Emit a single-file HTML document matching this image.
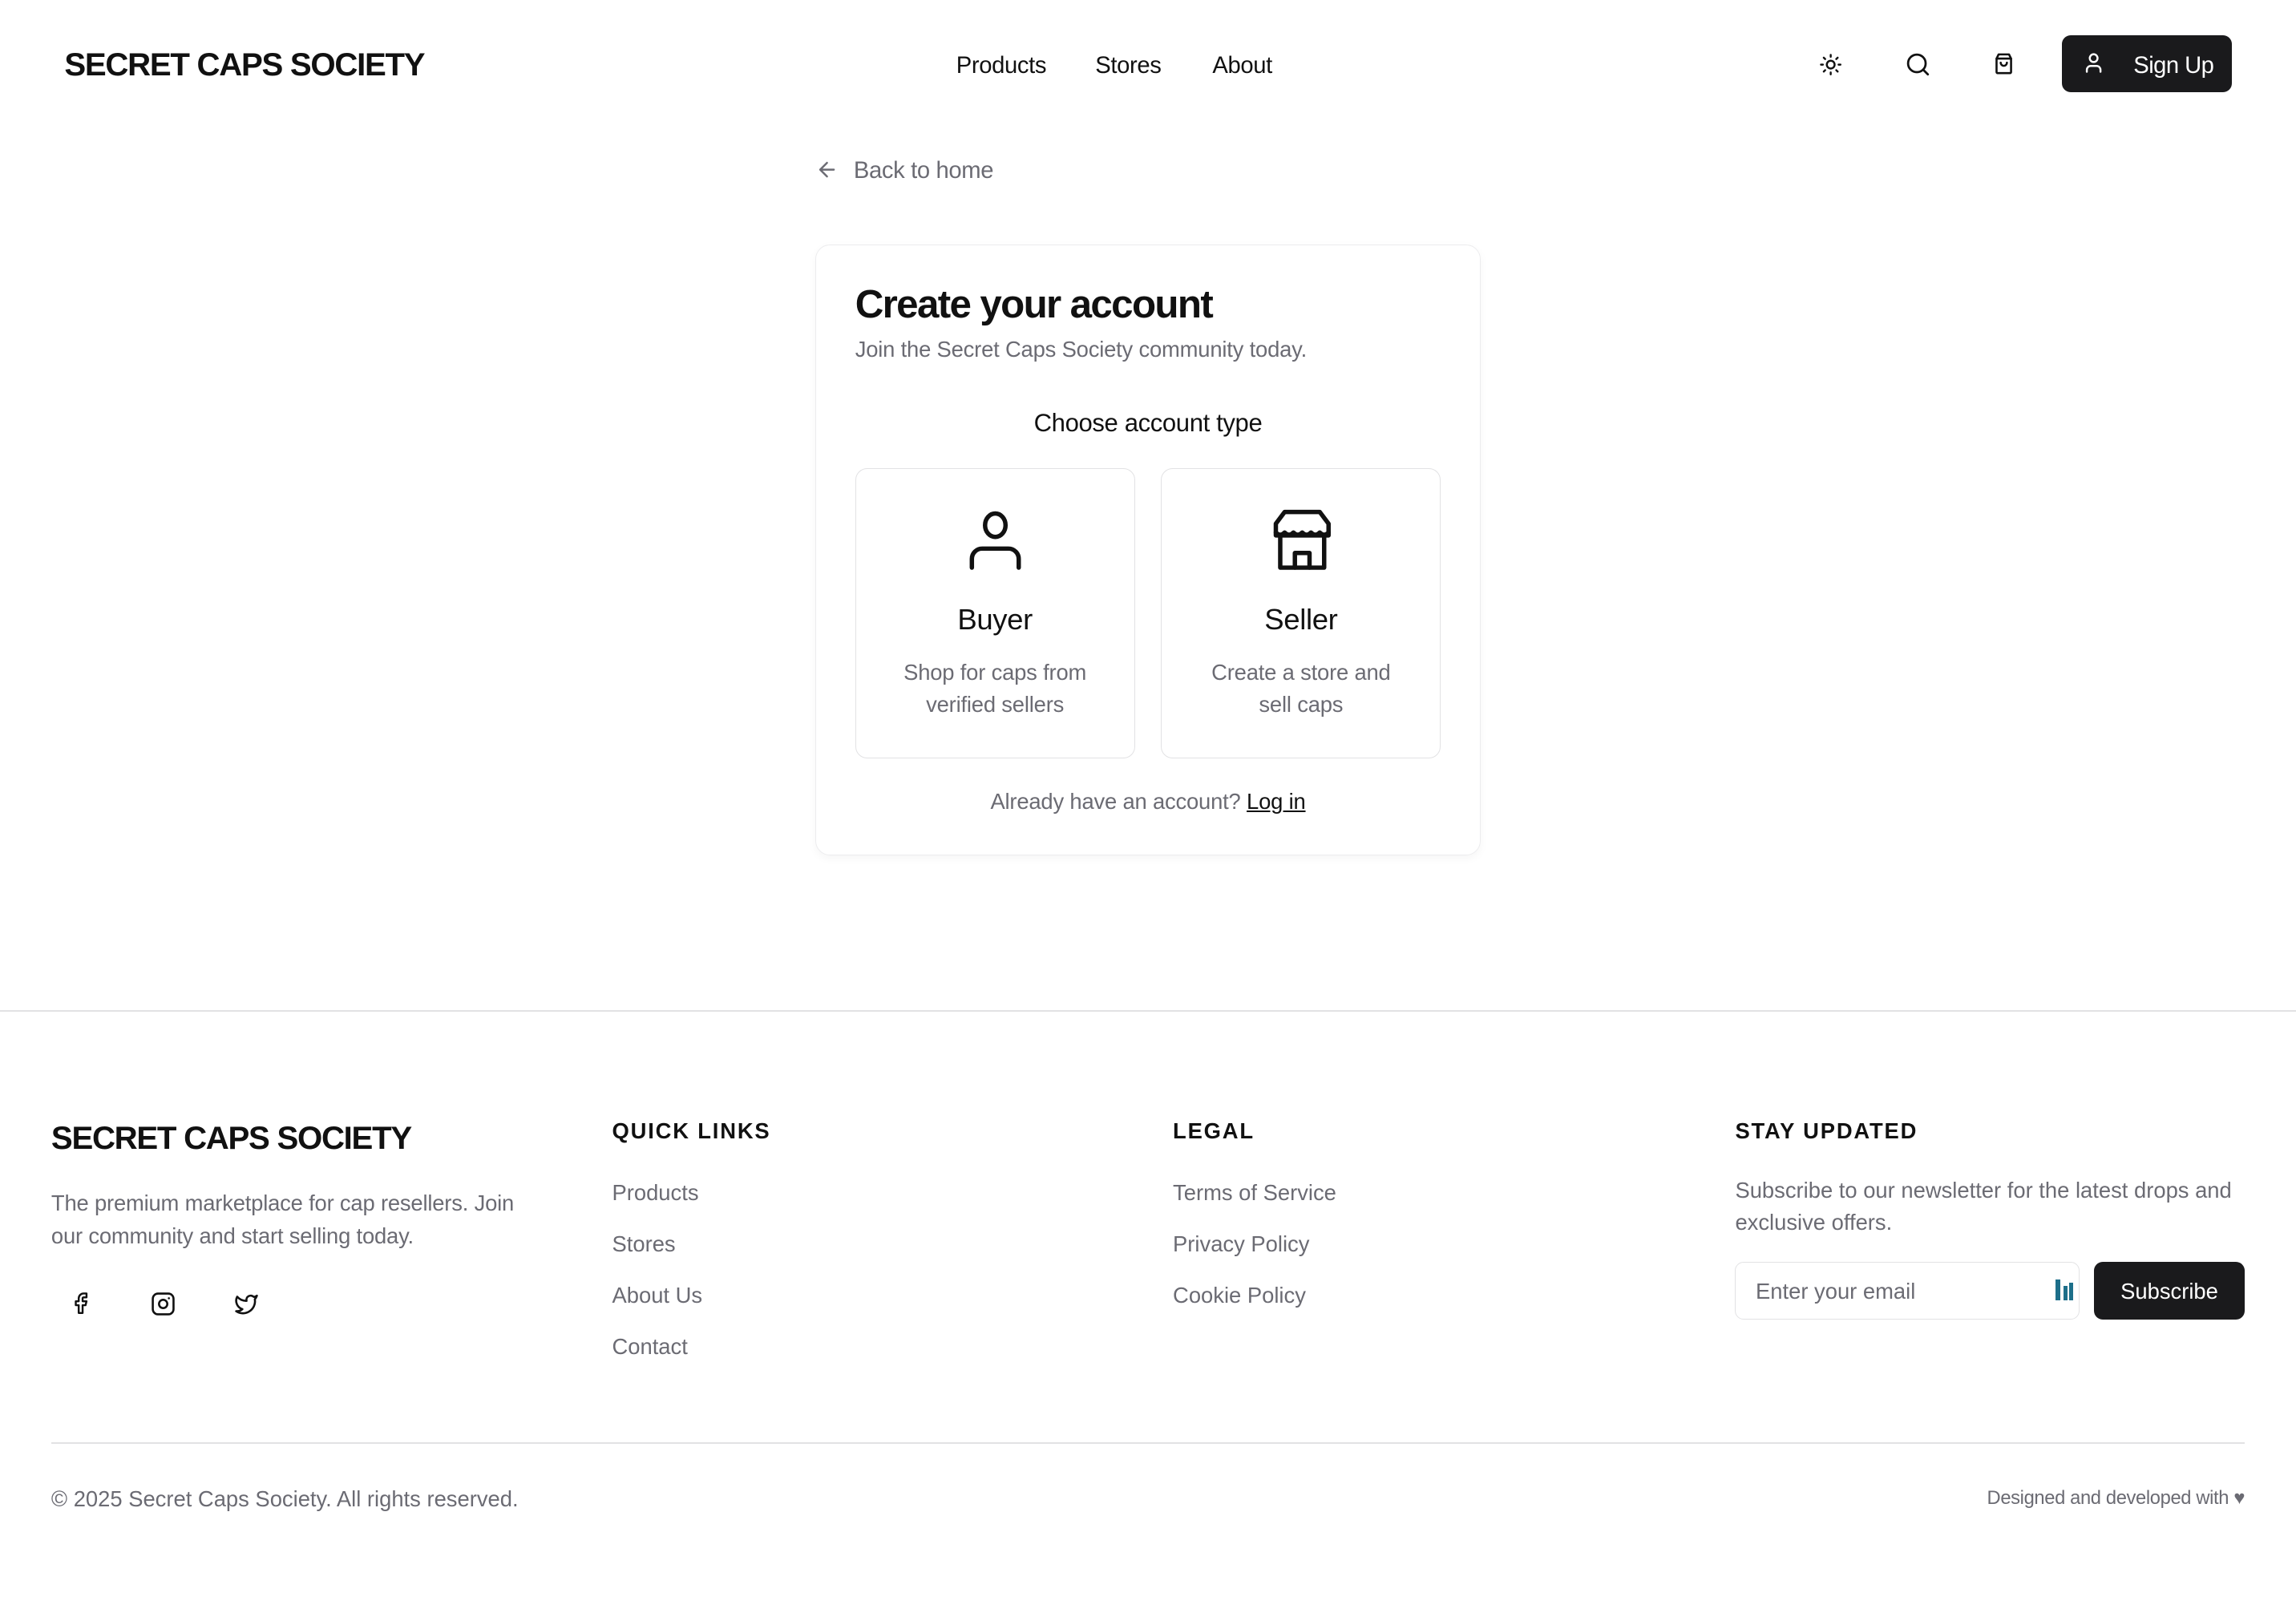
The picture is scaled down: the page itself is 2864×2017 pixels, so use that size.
<!DOCTYPE html>
<html><head><meta charset="utf-8"><style>
html{zoom:1.82653}
*{box-sizing:border-box;margin:0;padding:0}
body{width:1568px;height:1104px;background:#fff;font-family:"Liberation Sans",Arial,sans-serif;color:#111;position:relative;overflow:hidden}
.a{position:absolute;white-space:nowrap}
.g{color:#6b6b73}
svg{display:block}
.box{position:absolute;top:320px;width:191px;height:198px;border:1px solid #e2e2e4;border-radius:8px;text-align:center}
.box .t{position:absolute;top:91px;width:100%;font-size:20px;letter-spacing:-.2px}
.box .d{position:absolute;top:128px;width:100%;font-size:15px;line-height:22px;color:#6b6b73;letter-spacing:-.1px}
.box svg{position:absolute;left:75px;top:27px}
.fl{font-size:15px;color:#6b6b73}
.h{font-size:15px;font-weight:bold;letter-spacing:1px}
</style></head><body>
<div class="a" style="left:44px;top:32px;font-size:22px;font-weight:bold;letter-spacing:-.7px">SECRET CAPS SOCIETY</div>
<div class="a" style="left:653px;top:36px;font-size:16px;letter-spacing:-.2px">Products</div>
<div class="a" style="left:748px;top:36px;font-size:16px;letter-spacing:-.2px">Stores</div>
<div class="a" style="left:828px;top:36px;font-size:16px;letter-spacing:-.2px">About</div>
<svg class="a" style="left:1242px;top:36px" width="16" height="16" viewBox="0 0 24 24" fill="none" stroke="#111" stroke-width="2" stroke-linecap="round"><circle cx="12" cy="12" r="4"/><path d="M12 2v2M12 20v2M4.9 4.9l1.4 1.4M17.7 17.7l1.4 1.4M2 12h2M20 12h2M6.3 17.7l-1.4 1.4M19.1 4.9l-1.4 1.4"/></svg>
<svg class="a" style="left:1301px;top:35px" width="18" height="18" viewBox="0 0 24 24" fill="none" stroke="#111" stroke-width="2" stroke-linecap="round"><circle cx="11" cy="11" r="8"/><path d="M21 21l-4.3-4.3"/></svg>
<svg class="a" style="left:1360px;top:35px" width="17" height="17" viewBox="0 0 24 24" fill="none" stroke="#111" stroke-width="2" stroke-linecap="round" stroke-linejoin="round"><path d="M5 7l2-4h10l2 4v13a1 1 0 0 1-1 1H6a1 1 0 0 1-1-1z"/><path d="M5 7h14M9 11a3 3 0 0 0 6 0"/></svg>
<div class="a" style="left:1408px;top:24px;width:116px;height:39px;background:#1a1a1c;border-radius:6px"></div>
<svg class="a" style="left:1422px;top:35px" width="16" height="16" viewBox="0 0 24 24" fill="none" stroke="#fff" stroke-width="2" stroke-linecap="round"><circle cx="12" cy="7" r="4"/><path d="M5 21v-2a4 4 0 0 1 4-4h6a4 4 0 0 1 4 4v2"/></svg>
<div class="a" style="left:1457px;top:36px;font-size:16px;color:#fff;letter-spacing:-.3px">Sign Up</div>

<svg class="a" style="left:557px;top:108px" width="16" height="16" viewBox="0 0 24 24" fill="none" stroke="#6b6b73" stroke-width="2" stroke-linecap="round" stroke-linejoin="round"><path d="M19 12H5M12 19l-7-7 7-7"/></svg>
<div class="a g" style="left:583px;top:108px;font-size:16px;letter-spacing:-.2px">Back to home</div>

<div class="a" style="left:557px;top:167px;width:454px;height:417px;border:1px solid #ececee;border-radius:10px;box-shadow:0 2px 6px rgba(0,0,0,.04)"></div>
<div class="a" style="left:584px;top:192px;font-size:27px;font-weight:bold;letter-spacing:-.9px">Create your account</div>
<div class="a g" style="left:584px;top:230px;font-size:15px;letter-spacing:-.1px">Join the Secret Caps Society community today.</div>
<div class="a" style="left:557px;width:454px;top:279px;font-size:17px;text-align:center;letter-spacing:-.2px">Choose account type</div>
<div class="box" style="left:584px"><svg width="40" height="44" viewBox="0 0 40 44" fill="none" stroke="#111" stroke-width="3" stroke-linecap="round"><ellipse cx="20" cy="11" rx="7" ry="8"/><path d="M4 40v-6a7 7 0 0 1 7-7h18a7 7 0 0 1 7 7v6"/></svg><div class="t">Buyer</div><div class="d">Shop for caps from<br>verified sellers</div></div>
<div class="box" style="left:793px"><svg width="42" height="44" viewBox="0 0 42 44" fill="none" stroke="#111" stroke-width="3" stroke-linejoin="round" stroke-linecap="round"><path d="M9 2h24l6 8v8H3v-8z"/><path d="M3 16q3 3 6 0 3 3 6 0 3 3 6 0 3 3 6 0 3 3 6 0 3 3 6 0"/><path d="M6 18v22h30V18"/><path d="M16 40V30h10v10"/></svg><div class="t">Seller</div><div class="d">Create a store and<br>sell caps</div></div>
<div class="a g" style="left:557px;width:454px;top:539px;font-size:15px;text-align:center;letter-spacing:-.1px">Already have an account? <span style="color:#111;text-decoration:underline">Log in</span></div>

<div class="a" style="left:0;top:690px;width:1568px;height:1px;background:#e2e2e4"></div>
<div class="a" style="left:35px;top:765px;font-size:22px;font-weight:bold;letter-spacing:-.7px">SECRET CAPS SOCIETY</div>
<div class="a fl" style="left:35px;top:811px;line-height:22px;letter-spacing:-.1px">The premium marketplace for cap resellers. Join<br>our community and start selling today.</div>
<svg class="a" style="left:47px;top:882px" width="16" height="16" viewBox="0 0 24 24" fill="none" stroke="#111" stroke-width="2" stroke-linecap="round" stroke-linejoin="round"><path d="M18 2h-3a5 5 0 0 0-5 5v3H7v4h3v8h4v-8h3l1-4h-4V7a1 1 0 0 1 1-1h3z"/></svg>
<svg class="a" style="left:103px;top:882px" width="17" height="17" viewBox="0 0 24 24" fill="none" stroke="#111" stroke-width="2" stroke-linecap="round"><rect x="2" y="2" width="20" height="20" rx="5"/><circle cx="12" cy="12" r="4"/><path d="M17.5 6.5h.01"/></svg>
<svg class="a" style="left:160px;top:882px" width="17" height="17" viewBox="0 0 24 24" fill="none" stroke="#111" stroke-width="2" stroke-linejoin="round"><path d="M22 4s-.7 2.1-2 3.4c1.6 10-9.4 17.3-18 11.6 2.2.1 4.4-.6 6-2C3 15.5.5 9.6 3 5c2.2 2.6 5.6 4.1 9 4-.9-4.2 4-6.6 7-3.8 1.1 0 3-1.2 3-1.2z"/></svg>

<div class="a h" style="left:418px;top:764px">QUICK LINKS</div>
<div class="a fl" style="left:418px;top:806px">Products</div>
<div class="a fl" style="left:418px;top:841px">Stores</div>
<div class="a fl" style="left:418px;top:876px">About Us</div>
<div class="a fl" style="left:418px;top:911px">Contact</div>
<div class="a h" style="left:801px;top:764px">LEGAL</div>
<div class="a fl" style="left:801px;top:806px">Terms of Service</div>
<div class="a fl" style="left:801px;top:841px">Privacy Policy</div>
<div class="a fl" style="left:801px;top:876px">Cookie Policy</div>
<div class="a h" style="left:1185px;top:764px">STAY UPDATED</div>
<div class="a fl" style="left:1185px;top:802px;line-height:22px">Subscribe to our newsletter for the latest drops and<br>exclusive offers.</div>
<div class="a" style="left:1185px;top:862px;width:235px;height:39px;border:1px solid #e2e2e4;border-radius:6px"></div>
<div class="a g" style="left:1199px;top:873px;font-size:15px">Enter your email</div>
<div class="a" style="left:1404px;top:874px;width:3px;height:14px;background:#1d6f8a"></div>
<div class="a" style="left:1409px;top:878px;width:3px;height:10px;background:#1d6f8a"></div>
<div class="a" style="left:1413px;top:876px;width:3px;height:12px;background:#1d6f8a"></div>
<div class="a" style="left:1430px;top:862px;width:103px;height:39px;background:#1a1a1c;border-radius:6px;color:#fff;font-size:15px;text-align:center;line-height:40px">Subscribe</div>

<div class="a" style="left:35px;top:985px;width:1498px;height:1px;background:#e2e2e4"></div>
<div class="a fl" style="left:35px;top:1015px">© 2025 Secret Caps Society. All rights reserved.</div>
<div class="a g" style="right:35px;top:1016px;font-size:13px;letter-spacing:-.2px">Designed and developed with <span style="color:#6b6b73">♥</span></div>
</body></html>
